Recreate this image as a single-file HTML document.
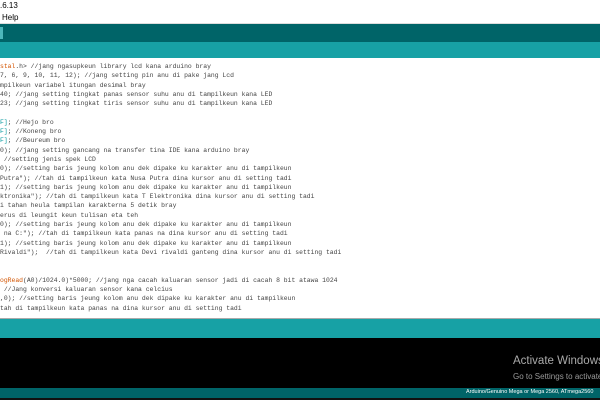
<!DOCTYPE html><html><head><style>
body{margin:0;width:600px;height:400px;overflow:hidden;background:#fff;position:relative;font-family:"Liberation Sans",sans-serif}
div{position:absolute;left:0;width:600px}
span{white-space:nowrap}
.code{top:62px;font-family:"Liberation Mono",monospace;font-size:6.4px;line-height:9.3px;color:#444;white-space:pre;left:0}
.o{color:#d35400}.t{color:#00979c}
</style></head><body>
<div style="top:0;height:24px;background:#fff"></div>
<span style="position:absolute;left:0;top:1px;font-size:8px">.6.13</span>
<span style="position:absolute;left:2px;top:13px;font-size:8px">Help</span>
<div style="top:23px;height:1px;background:#ddd"></div>
<div style="top:24px;height:18px;background:#006468"></div>
<div style="top:27px;left:0;width:3px;height:12px;background:#4db7bb"></div>
<div style="top:42px;height:16px;background:#17a1a5"></div>
<div class="code"><span class="o">stal</span>.h&gt; //jang ngasupkeun library lcd kana arduino bray
7, 6, 9, 10, 11, 12); //jang setting pin anu di pake jang Lcd
mpilkeun variabel itungan desimal bray
40; //jang setting tingkat panas sensor suhu anu di tampilkeun kana LED
23; //jang setting tingkat tiris sensor suhu anu di tampilkeun kana LED

<span class="t">F]</span>; //Hejo bro
<span class="t">F]</span>; //Koneng bro
<span class="t">F]</span>; //Beureum bro
0); //jang setting gancang na transfer tina IDE kana arduino bray
 //setting jenis spek LCD
0); //setting baris jeung kolom anu dek dipake ku karakter anu di tampilkeun
Putra"); //tah di tampilkeun kata Nusa Putra dina kursor anu di setting tadi
1); //setting baris jeung kolom anu dek dipake ku karakter anu di tampilkeun
ktronika"); //tah di tampilkeun kata T Elektronika dina kursor anu di setting tadi
i tahan heula tampilan karakterna 5 detik bray
erus di leungit keun tulisan eta teh
0); //setting baris jeung kolom anu dek dipake ku karakter anu di tampilkeun
 na C:"); //tah di tampilkeun kata panas na dina kursor anu di setting tadi
1); //setting baris jeung kolom anu dek dipake ku karakter anu di tampilkeun
Rivaldi");  //tah di tampilkeun kata Devi rivaldi ganteng dina kursor anu di setting tadi


<span class="o">ogRead</span>(A0)/1024.0)*5000; //jang nga cacah kaluaran sensor jadi di cacah 8 bit atawa 1024
 //Jang konversi kaluaran sensor kana celcius
,0); //setting baris jeung kolom anu dek dipake ku karakter anu di tampilkeun
tah di tampilkeun kata panas na dina kursor anu di setting tadi</div>
<div style="top:318px;height:1px;background:#aaa"></div>
<div style="top:319px;height:19px;background:#17a1a5"></div>
<div style="top:338px;height:50px;background:#000"></div>
<span style="position:absolute;left:513px;top:355px;font-size:11.5px;color:#aaa">Activate Windows</span>
<span style="position:absolute;left:513px;top:372px;font-size:8px;color:#999">Go to Settings to activate</span>
<div style="top:388px;height:10px;background:#006468"></div>
<span style="position:absolute;left:466px;top:389px;font-size:5.5px;color:#fff">Arduino/Genuino Mega or Mega 2560, ATmega2560</span>
<div style="top:398px;height:2px;background:#111"></div>
</body></html>
